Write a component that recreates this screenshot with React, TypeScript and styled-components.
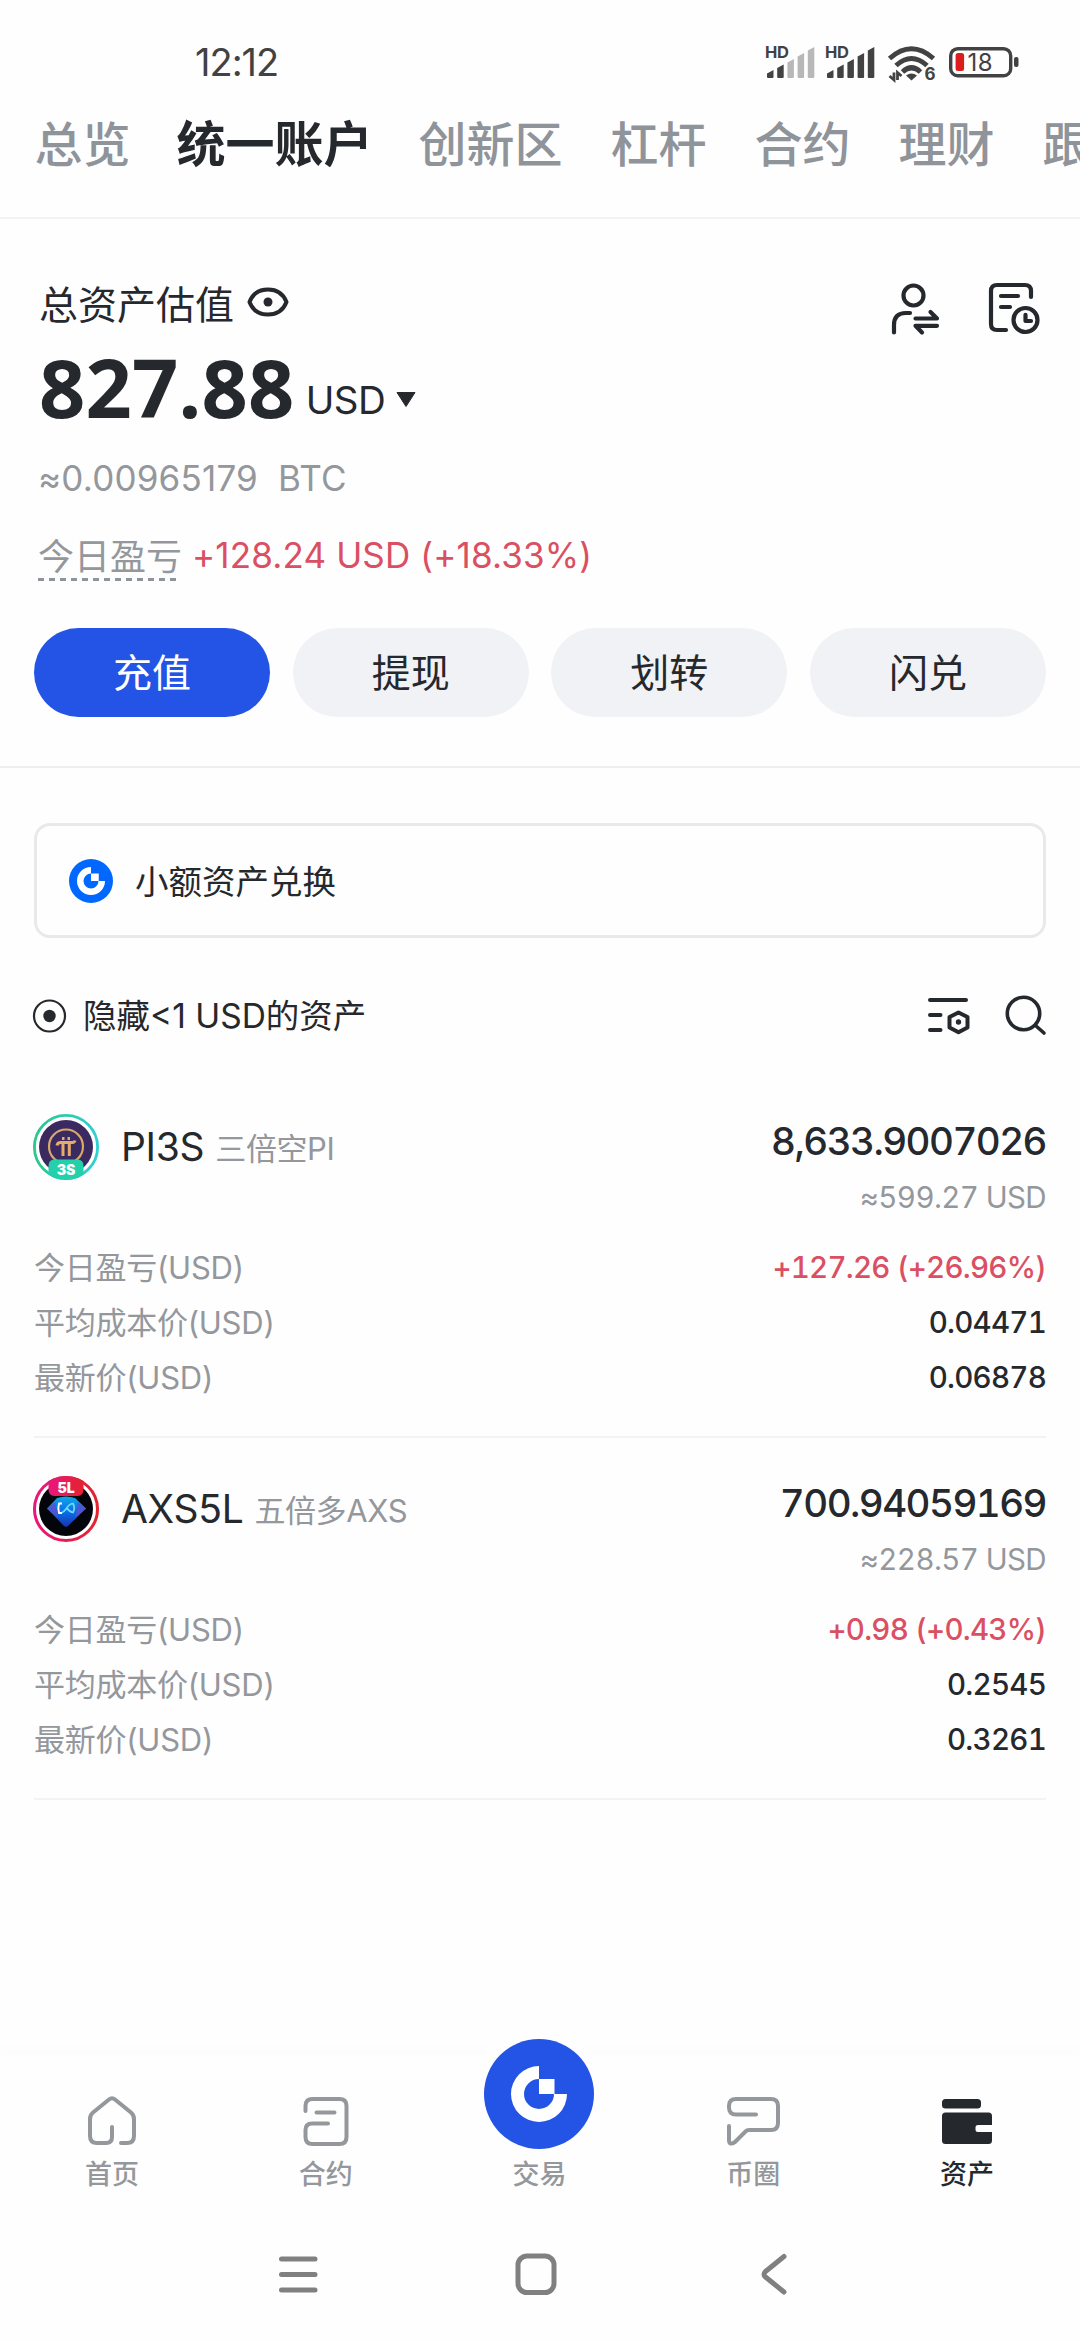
import React from "react";
import styled, { createGlobalStyle } from "styled-components";

const INK = "#25282d";
const MUTED = "#94979b";
const RED = "#db4f62";
const BLUE = "#2354e6";

const GlobalStyle = createGlobalStyle`
  * { box-sizing: border-box; }
  body {
    margin: 0;
    background: #fefefe;
    color: ${INK};
    font-family: Inter, "Noto Sans CJK SC", sans-serif;
    font-weight: 400;
  }
  svg { display: block; flex: none; overflow: visible; }
`;

const Screen = styled.div`
  width: 1080px;
  height: 2340px;
  display: flex;
  flex-direction: column;
  overflow: hidden;
`;

const StatusBar = styled.header`
  height: 84px;
  padding: 40px 61px 0 195px;
  display: flex;
  justify-content: space-between;
`;

const Clock = styled.span`
  height: 44px;
  line-height: 44px;
  font-size: 38px;
  letter-spacing: -1px;
  color: #424242;
`;

const StatusIcons = styled.div`
  height: 44px;
`;

const Tabs = styled.nav`
  height: 135px;
  padding: 0 0 19px 34.5px;
  display: flex;
  align-items: center;
  gap: 48px;
  border-bottom: 2px solid #f3f3f3;
  white-space: nowrap;
  overflow: hidden;
`;

const Tab = styled.span<{ $active?: boolean }>`
  flex: none;
  margin: ${(p) => (p.$active ? "0 -2px" : "0")};
  font-family: "Noto Sans CJK SC", sans-serif;
  font-size: ${(p) => (p.$active ? 49 : 48)}px;
  line-height: 60px;
  font-weight: ${(p) => (p.$active ? 700 : 500)};
  color: ${(p) => (p.$active ? INK : "#8f949a")};
`;

const Summary = styled.section`
  height: 549px;
  padding: 60px 34px 0;
  border-bottom: 2px solid #eeeff0;
`;

const TitleRow = styled.div`
  height: 48px;
  display: flex;
  align-items: center;
  justify-content: space-between;
  padding: 0 6px 0 5px;
`;

const TitleGroup = styled.div`
  height: 48px;
  display: flex;
  align-items: flex-start;
  gap: 13px;
`;

const EyeSlot = styled.span`
  padding-top: 8px;
`;

const Title = styled.h1`
  margin: 0;
  font-size: 39px;
  line-height: 51px;
  font-weight: 400;
`;

const Actions = styled.div`
  display: flex;
  gap: 49px;
  padding-top: 10px;
`;

const TotalRow = styled.div`
  height: 78px;
  margin-top: 23px;
  padding-left: 5px;
  display: flex;
  align-items: center;
`;

const Total = styled.span`
  height: 78px;
  font-family: "Noto Sans", sans-serif;
  font-size: 81px;
  line-height: 73px;
  font-weight: 700;
  letter-spacing: 0.2px;
`;

const Currency = styled.span`
  display: flex;
  align-items: center;
  gap: 11px;
  margin: 21px 0 0 11px;
  font-size: 38.5px;
  line-height: 48px;
  letter-spacing: -0.5px;
`;

const BtcRow = styled.div`
  height: 44px;
  margin-top: 28px;
  padding-left: 4px;
  font-size: 35px;
  line-height: 44px;
  letter-spacing: 0.2px;
  color: ${MUTED};
  white-space: pre;
`;

const PnlRow = styled.div`
  height: 48px;
  margin-top: 33px;
  padding-left: 4px;
  display: flex;
  gap: 10px;
  font-size: 35px;
  line-height: 44px;
`;

const PnlLabel = styled.span`
  height: 48px;
  line-height: 49px;
  font-size: 36px;
  color: ${MUTED};
  background: repeating-linear-gradient(90deg, #8f949a 0 6px, transparent 6px 11px) left bottom / 138px 3px no-repeat;
`;

const PnlValue = styled.span`
  color: ${RED};
  letter-spacing: 0.15px;
`;

const Buttons = styled.div`
  display: grid;
  grid-template-columns: repeat(4, 1fr);
  gap: 22.5px;
  margin-top: 47px;
`;

const Pill = styled.button<{ $primary?: boolean }>`
  height: 89px;
  border: 0;
  border-radius: 45px;
  padding: 0;
  font: inherit;
  font-size: 39px;
  line-height: 89px;
  color: ${(p) => (p.$primary ? "#fff" : INK)};
  background: ${(p) => (p.$primary ? BLUE : "#f1f2f5")};
`;

const Notice = styled.section`
  height: 115px;
  margin: 55px 34px 0;
  padding-left: 32px;
  display: flex;
  align-items: center;
  gap: 22px;
  border: 3px solid #e9e9ea;
  border-radius: 16px;
`;

const NoticeText = styled.span`
  padding-top: 2px;
  font-size: 33.5px;
  line-height: 48px;
`;

const FilterRow = styled.div`
  height: 48px;
  margin: 54px 34px 36px 33px;
  display: flex;
  align-items: center;
  justify-content: space-between;
`;

const FilterToggle = styled.label`
  display: flex;
  align-items: center;
  gap: 16px;
  font-size: 33.5px;
  line-height: 48px;
`;

const FilterActions = styled.div`
  display: flex;
  gap: 36px;
`;

const Asset = styled.article`
  height: 362px;
  margin: 0 34px;
  padding-top: 38px;
  border-bottom: 2px solid #f3f3f3;
`;

const AssetHead = styled.div`
  height: 126px;
  display: flex;
  justify-content: space-between;
`;

const AssetName = styled.div`
  height: 66px;
  margin-left: -1px;
  display: flex;
  align-items: center;
  line-height: 48px;
`;

const Symbol = styled.span`
  margin-left: 22px;
  font-size: 39px;
  letter-spacing: -0.3px;
`;

const Alias = styled.span`
  margin: 3px 0 0 11px;
  font-size: 31px;
  letter-spacing: -0.4px;
  color: ${MUTED};
`;

const Balance = styled.div`
  display: flex;
  flex-direction: column;
  align-items: flex-end;
  font-variant-numeric: tabular-nums;
`;

const Amount = styled.span`
  margin-top: 4px;
  font-size: 38.5px;
  line-height: 47px;
  font-weight: 500;
  letter-spacing: -1.55px;
`;

const Worth = styled.span`
  margin-top: 12px;
  font-size: 29.5px;
  line-height: 40px;
  letter-spacing: -0.6px;
  color: ${MUTED};
`;

const Detail = styled.div`
  height: 55px;
  display: flex;
  align-items: center;
  justify-content: space-between;
`;

const DetailLabel = styled.span`
  font-size: 31px;
  line-height: 55px;
  letter-spacing: -0.25px;
  color: ${MUTED};
`;

const DetailValue = styled.span<{ $gain?: boolean }>`
  font-size: 29.5px;
  line-height: 53px;
  font-weight: 500;
  letter-spacing: -0.75px;
  font-variant-numeric: tabular-nums;
  color: ${(p) => (p.$gain ? RED : INK)};
`;

const TabBar = styled.nav`
  height: 136px;
  margin-top: auto;
  padding: 0 6px 0 5px;
  display: grid;
  grid-template-columns: repeat(5, 1fr);
  align-items: end;
  background: #fefefe;
  box-shadow: 0 -8px 12px rgba(0, 0, 0, 0.01);
`;

const BarItem = styled.a<{ $active?: boolean }>`
  display: flex;
  flex-direction: column;
  align-items: center;
  justify-content: flex-end;
  height: 100px;
  color: ${(p) => (p.$active ? INK : "#94979b")};
`;

const BarLabel = styled.span`
  margin-top: 7px;
  height: 36px;
  font-size: 27px;
  line-height: 40px;
  font-weight: 500;
`;

const Fab = styled.span`
  width: 110px;
  height: 110px;
  flex: none;
  border-radius: 50%;
  background: ${BLUE};
  display: grid;
  place-items: center;
  margin-bottom: -1px;
  box-shadow: 0 0 0 12px #fefefe;
`;

const SystemBar = styled.footer`
  height: 149px;
  padding: 62px 285px 0 277px;
  display: flex;
  justify-content: space-between;
`;

const Bars = ({ x, lit }: { x: number; lit: number }) => (
  <g transform={`translate(${x} 0)`}>
    <text x="0" y="18" fontFamily="Inter" fontSize="16.5" fontWeight="700" fill="#424242" textLength="24">HD</text>
    {[8, 13.5, 19, 25, 31].map((h, i) => (
      <path
        key={h}
        d={`M${2 + i * 10.2} ${38 - h + 3.5}l6.5 -3.5V37q0 1 -1 1h-4.5q-1 0 -1 -1z`}
        fill={i < lit ? "#424242" : "#b8b8b8"}
      />
    ))}
  </g>
);

const SignalIcons = () => (
  <svg width="254" height="44" viewBox="0 0 254 44">
    <Bars x={0} lit={2} />
    <Bars x={60} lit={5} />
    <g fill="none" stroke="#424242" strokeWidth="5">
      <path d="M124.5 18.5Q146.5 -1 168.5 18.5" />
      <path d="M131 25.5Q146.5 11.5 162 25.5" />
      <path d="M137.5 32Q146.5 23.5 155.5 32" />
    </g>
    <path d="M141 35.5q5.5 -4 11 0l-5.5 5z" fill="#424242" />
    <path d="M129 32.5v7.5l-4.5 -4M132.5 40v-7.5l4 3.5" fill="none" stroke="#424242" strokeWidth="2.8" />
    <text x="159.5" y="40" fontFamily="Inter" fontSize="17" fontWeight="700" fill="#424242">6</text>
    <rect x="185.7" y="8.7" width="60" height="27" rx="7" fill="none" stroke="#424242" strokeWidth="3.4" />
    <rect x="249" y="17" width="4.5" height="10" rx="2" fill="#424242" />
    <rect x="190.6" y="13" width="8.5" height="18" rx="2.5" fill="#dc1d1d" />
    <text x="202.5" y="31" fontSize="24" fill="#424242" textLength="25">18</text>
  </svg>
);

const EyeIcon = () => (
  <svg width="42" height="30" viewBox="0 0 42 30">
    <path d="M2.5 15C6 6 13 2.5 21 2.5S36 6 39.5 15C36 24 29 27.5 21 27.5S6 24 2.5 15z" fill="none" stroke={INK} strokeWidth="4" strokeLinejoin="round" />
    <circle cx="21" cy="15" r="4.5" fill={INK} />
  </svg>
);

const SwitchUserIcon = () => (
  <svg width="48" height="54" viewBox="0 0 48 54" fill="none" stroke={INK} strokeWidth="4.2" strokeLinecap="round" strokeLinejoin="round">
    <circle cx="22.5" cy="14.5" r="10" />
    <path d="M3 51.5V44Q3 32 15 32H19" />
    <path d="M24.5 37.5H46L39.5 31M46 44.8H24.5L31 51.5" />
  </svg>
);

const HistoryIcon = () => (
  <svg width="52" height="54" viewBox="0 0 52 54" fill="none" stroke={INK} strokeWidth="4.2" strokeLinecap="round" strokeLinejoin="round">
    <path d="M43 16V10Q43 4 37 4H9Q3 4 3 10V43Q3 49 9 49H18" />
    <path d="M13 15H30M13 26H22" />
    <circle cx="37.5" cy="39" r="12" />
    <path d="M37.5 33.8V40H43" />
  </svg>
);

/* Ring open in its upper-right quarter, with a square set in the opening. */
const GateMark = ({ size }: { size: number }) => (
  <svg width={size} height={size} viewBox="0 0 56 56" fill="#fff">
    <path d="M28 0A28 28 0 1 0 56 28H43A15 15 0 1 1 28 13z" />
    <path d="M28 13H43.5V28H28z" />
  </svg>
);

const NoticeBadge = styled.span`
  width: 44px;
  height: 44px;
  border-radius: 50%;
  background: #0068ff;
  display: grid;
  place-items: center;
`;

const RadioIcon = () => (
  <svg width="34" height="34" viewBox="0 0 34 34">
    <circle cx="16.5" cy="17" r="15.5" fill="none" stroke={INK} strokeWidth="2.2" />
    <circle cx="16.5" cy="17" r="6.2" fill={INK} />
  </svg>
);

const ListSettingsIcon = () => (
  <svg width="43" height="42" viewBox="0 0 43 42" fill="none" stroke={INK} strokeWidth="4" strokeLinecap="round" strokeLinejoin="round">
    <path d="M3 5H39M3 20H13.5M3 35H13.5" />
    <path d="M31.5 17.5L40.5 22V32.5L31.5 37.3L22.5 32.5V22z" />
    <circle cx="31.5" cy="27" r="2.7" fill={INK} stroke="none" />
  </svg>
);

const SearchIcon = () => (
  <svg width="40" height="42" viewBox="0 0 40 42" fill="none" stroke={INK} strokeWidth="3.6" strokeLinecap="round">
    <circle cx="17.5" cy="18.5" r="16.2" />
    <path d="M29.5 30.5L38 38" />
  </svg>
);

const PiCoin = () => (
  <svg width="66" height="66" viewBox="0 0 66 66">
    <defs>
      <linearGradient id="piRing" x1="0" x2="1">
        <stop offset="0" stopColor="#2fc58f" />
        <stop offset="1" stopColor="#2fd0d0" />
      </linearGradient>
      <clipPath id="piClip"><circle cx="33" cy="33" r="33" /></clipPath>
    </defs>
    <circle cx="33" cy="33" r="31.6" fill="#fff" stroke="url(#piRing)" strokeWidth="2.8" />
    <circle cx="33" cy="33" r="27" fill="#3b2a60" />
    <circle cx="33" cy="32.5" r="17" fill="none" stroke="#d9a86c" strokeWidth="2.2" />
    <path d="M24 31.5q0.5 -3 3.5 -3h12q2 0 2.5 -2M30 28.5v13.5M36.3 28.5v13.5M29 24.5h2.5M34.5 24.5h2.5" fill="none" stroke="#e3ac6c" strokeWidth="3" />
    <path clipPath="url(#piClip)" d="M15.5 52q0 -6.5 6 -6.5h23q6 0 6 6.5v14h-35z" fill="#23d0ac" />
    <text x="33" y="60.5" fontFamily="Inter" fontSize="14" fontWeight="900" fill="#fff" textAnchor="middle">3S</text>
  </svg>
);

const AxsCoin = () => (
  <svg width="66" height="66" viewBox="0 0 66 66">
    <defs>
      <linearGradient id="axsRing" x1="0" x2="1">
        <stop offset="0" stopColor="#e8177c" />
        <stop offset="1" stopColor="#e3232f" />
      </linearGradient>
      <linearGradient id="axsGem" x1="0" y1="0" x2="0" y2="1">
        <stop offset="0" stopColor="#12a6e6" />
        <stop offset="0.5" stopColor="#0a6fe6" />
        <stop offset="1" stopColor="#1633b4" />
      </linearGradient>
      <clipPath id="axsClip"><circle cx="33" cy="33" r="33" /></clipPath>
    </defs>
    <circle cx="33" cy="33" r="31.5" fill="#fff" stroke="url(#axsRing)" strokeWidth="3" />
    <circle cx="33" cy="33" r="27" fill="#04050a" />
    <path d="M14 32.5L24 22Q33 19 42 22L53 32.5L35 50Q33 51.5 31 50z" fill="url(#axsGem)" />
    <path d="M14 32.5L22 26.5L25 41.5zM53 32.5L45 26.5L42 41.5z" fill="#5c50cf" opacity="0.85" />
    <path d="M28 37q3 -1 5 -4q3 -5 7 -5.5q2.5 4.5 0 9q-4 -1 -6.5 -5" fill="none" stroke="#6fdcfb" strokeWidth="1.7" />
    <path d="M29 27.5h-3q-1.5 5 0 9.5h3" fill="none" stroke="#fff" strokeWidth="1.9" />
    <path clipPath="url(#axsClip)" d="M15.5 0h35v13.5q0 6.5 -6 6.5h-23q-6 0 -6 -6.5z" fill="url(#axsRing)" />
    <text x="33" y="17" fontFamily="Inter" fontSize="14" fontWeight="900" fill="#fff" textAnchor="middle">5L</text>
  </svg>
);

const iconProps = {
  width: 56,
  height: 56,
  viewBox: "0 0 56 56",
  fill: "none",
  stroke: "currentColor",
  strokeWidth: 4,
  strokeLinecap: "round" as const,
  strokeLinejoin: "round" as const,
};

const HomeIcon = () => (
  <svg {...iconProps}>
    <path d="M37 51H43Q50 51 50 44V27Q50 23 47 20.5L31 7.5Q28 5 25 7.5L9 20.5Q6 23 6 27V44Q6 51 13 51H22Q28 51 28 45V35" />
  </svg>
);

const ContractIcon = () => (
  <svg {...iconProps}>
    <path d="M7.5 19V14Q7.5 7 14.5 7H41.5Q48.5 7 48.5 14V45Q48.5 52 41.5 52H14.5Q7.5 52 7.5 45V38Q7.5 31.5 14 31.5H30M18.5 20.5H36.5" />
  </svg>
);

const ChatIcon = () => (
  <svg {...iconProps}>
    <path d="M31 22.5H11Q4 22.5 4 15.5V14Q4 7 11 7H46Q53 7 53 14V31Q53 38 46 38H24Q22 38 20.5 39.5L10 50Q4 54 4 48V34" />
  </svg>
);

const WalletIcon = () => (
  <svg width="56" height="56" viewBox="0 0 56 56" fill="currentColor">
    <rect x="3" y="7" width="39" height="9.5" rx="3.5" />
    <path d="M6.5 20.5H49.5Q53 20.5 53 24V33H39Q36.5 33 36.5 35.5V37.5Q36.5 40 39 40H53V48.5Q53 52 49.5 52H6.5Q3 52 3 48.5V24Q3 20.5 6.5 20.5z" />
  </svg>
);

const assets = [
  { symbol: "PI3S", alias: "三倍空PI", amount: "8,633.9007026", worth: "≈599.27 USD", pnl: "+127.26 (+26.96%)", cost: "0.04471", last: "0.06878", Icon: PiCoin },
  { symbol: "AXS5L", alias: "五倍多AXS", amount: "700.94059169", worth: "≈228.57 USD", pnl: "+0.98 (+0.43%)", cost: "0.2545", last: "0.3261", Icon: AxsCoin },
];

const tabs = ["总览", "统一账户", "创新区", "杠杆", "合约", "理财", "跟"];

export default function App() {
  return (
    <Screen>
      <GlobalStyle />
      <StatusBar>
        <Clock>12:12</Clock>
        <StatusIcons>
          <SignalIcons />
        </StatusIcons>
      </StatusBar>
      <Tabs>
        {tabs.map((t) => (
          <Tab key={t} $active={t === "统一账户"}>{t}</Tab>
        ))}
      </Tabs>
      <Summary>
        <TitleRow>
          <TitleGroup>
            <Title>总资产估值</Title>
            <EyeSlot><EyeIcon /></EyeSlot>
          </TitleGroup>
          <Actions>
            <SwitchUserIcon />
            <HistoryIcon />
          </Actions>
        </TitleRow>
        <TotalRow>
          <Total>827.88</Total>
          <Currency>
            USD
            <svg width="20" height="15" viewBox="0 0 20 15"><path d="M1 0.5H19L10 14.5z" fill={INK} stroke={INK} strokeLinejoin="round" /></svg>
          </Currency>
        </TotalRow>
        <BtcRow>≈0.00965179  BTC</BtcRow>
        <PnlRow>
          <PnlLabel>今日盈亏</PnlLabel>
          <PnlValue>+128.24 USD (+18.33%)</PnlValue>
        </PnlRow>
        <Buttons>
          <Pill $primary>充值</Pill>
          <Pill>提现</Pill>
          <Pill>划转</Pill>
          <Pill>闪兑</Pill>
        </Buttons>
      </Summary>
      <Notice>
        <NoticeBadge><GateMark size={28} /></NoticeBadge>
        <NoticeText>小额资产兑换</NoticeText>
      </Notice>
      <FilterRow>
        <FilterToggle>
          <RadioIcon />
          <span>隐藏&lt;1 USD的资产</span>
        </FilterToggle>
        <FilterActions>
          <ListSettingsIcon />
          <SearchIcon />
        </FilterActions>
      </FilterRow>
      {assets.map(({ Icon, ...a }) => (
        <Asset key={a.symbol}>
          <AssetHead>
            <AssetName>
              <Icon />
              <Symbol>{a.symbol}</Symbol>
              <Alias>{a.alias}</Alias>
            </AssetName>
            <Balance>
              <Amount>{a.amount}</Amount>
              <Worth>{a.worth}</Worth>
            </Balance>
          </AssetHead>
          <Detail>
            <DetailLabel>今日盈亏(USD)</DetailLabel>
            <DetailValue $gain>{a.pnl}</DetailValue>
          </Detail>
          <Detail>
            <DetailLabel>平均成本价(USD)</DetailLabel>
            <DetailValue>{a.cost}</DetailValue>
          </Detail>
          <Detail>
            <DetailLabel>最新价(USD)</DetailLabel>
            <DetailValue>{a.last}</DetailValue>
          </Detail>
        </Asset>
      ))}
      <TabBar>
        <BarItem><HomeIcon /><BarLabel>首页</BarLabel></BarItem>
        <BarItem><ContractIcon /><BarLabel>合约</BarLabel></BarItem>
        <BarItem><Fab><GateMark size={56} /></Fab><BarLabel>交易</BarLabel></BarItem>
        <BarItem><ChatIcon /><BarLabel>币圈</BarLabel></BarItem>
        <BarItem $active><WalletIcon /><BarLabel>资产</BarLabel></BarItem>
      </TabBar>
      <SystemBar>
        <svg width="42" height="42" viewBox="0 0 42 42" stroke="#808080" strokeWidth="5" strokeLinecap="round">
          <path d="M4.5 6H38M4.5 21.5H38M4.5 37H38" />
        </svg>
        <svg width="42" height="42" viewBox="0 0 42 42" fill="none" stroke="#808080" strokeWidth="5">
          <rect x="3" y="3" width="36" height="36.5" rx="9" />
        </svg>
        <svg width="42" height="42" viewBox="0 0 42 42" fill="none" stroke="#808080" strokeWidth="5" strokeLinecap="round" strokeLinejoin="round">
          <path d="M31 3.5L12.5 18.5Q9.5 21.5 12.5 24L31 39" />
        </svg>
      </SystemBar>
    </Screen>
  );
}
